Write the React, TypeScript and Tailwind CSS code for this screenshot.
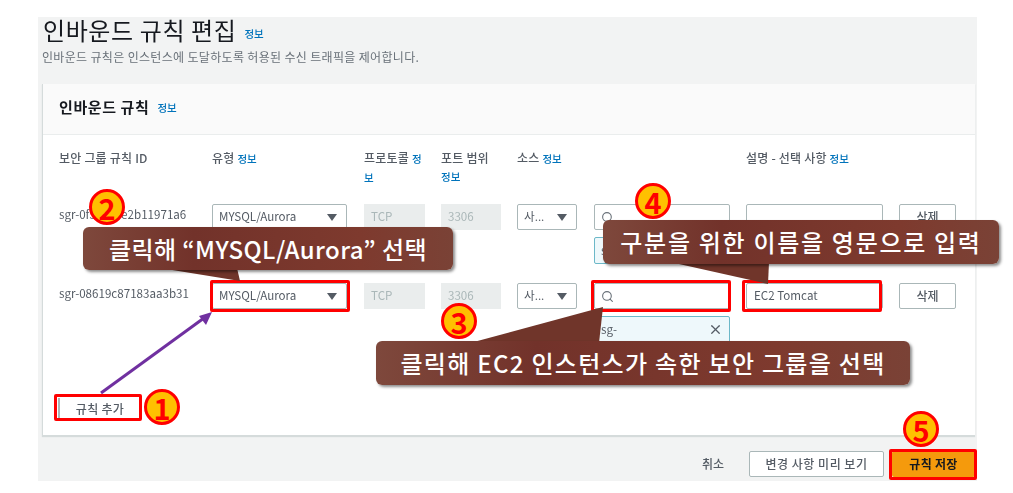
import { Search, X } from "lucide-react";

const font = "[font-family:'Noto_Sans_CJK_KR','Noto_Sans',sans-serif]";
const headers = [
  { label: "보안 그룹 규칙 ID", info: false },
  { label: "유형", info: true },
  { label: "프로토콜", info: true },
  { label: "포트 범위", info: true },
  { label: "소스", info: true },
  { label: "", info: false },
  { label: "설명 - 선택 사항", info: true },
  { label: "", info: false },
];
const rows = [
  { id: "sgr-0f5c1a7e2b11971a6", desc: "" },
  { id: "sgr-08619c87183aa3b31", desc: "EC2 Tomcat" },
];
const circles = [
  { label: "1", cls: "left-[144px] top-[389px]" },
  { label: "2", cls: "left-[89px] top-[189px]" },
  { label: "3", cls: "left-[441px] top-[303px]" },
  { label: "4", cls: "left-[635px] top-[183px]" },
  { label: "5", cls: "left-[903px] top-[411px]" },
];
const redBoxes = [
  "left-[54px] top-[394px] w-[88px] h-[27px]",
  "left-[210px] top-[280px] w-[140px] h-[32px]",
  "left-[591px] top-[280px] w-[140px] h-[32px]",
  "left-[742px] top-[280px] w-[140px] h-[32px]",
  "left-[889px] top-[449px] w-[88px] h-[31px]",
];

function Info() {
  return <span className="text-[10.5px] font-medium tracking-normal text-[#0073bb]">정보</span>;
}

function Select({ text, className }: { text: string; className: string }) {
  return (
    <div className={`flex h-[26px] items-center justify-between rounded-[2px] border border-[#aab7b8] bg-white pl-[6px] pr-[9px] text-[11.6px] text-[#545b64] ${className}`}>
      <span>{text}</span>
      <span className="h-0 w-0 border-x-[5px] border-t-[7px] border-x-transparent border-t-[#545b64]" />
    </div>
  );
}

function Rule({ id, desc }: { id: string; desc: string }) {
  return (
    <>
      <div className="pt-[1px] text-[11.6px] leading-[18px] text-[#545b64]">{id}</div>
      <Select text="MYSQL/Aurora" className="w-[135px]" />
      <div className="flex h-[26px] items-center bg-[#eaeded] pl-[7px] text-[11.6px] text-[#aab7b8]">TCP</div>
      <div className="flex h-[26px] items-center bg-[#eaeded] pl-[7px] text-[11.6px] text-[#aab7b8]">3306</div>
      <Select text="사..." className="w-[60px]" />
      <div>
        <div className="flex h-[26px] items-center rounded-[2px] border border-[#aab7b8] bg-white pl-[6px]">
          <Search size={13} strokeWidth={2} className="text-[#687078]" />
        </div>
        <div className="mt-[7px] flex h-[27px] items-center justify-between rounded-[2px] border border-[#6cb8c8] bg-[#eef8fb] px-[6px] text-[11.6px] text-[#545b64]">
          <span>sg-</span>
          <X size={15} strokeWidth={2} className="text-[#545b64]" />
        </div>
      </div>
      <div className="flex h-[26px] items-center rounded-[2px] border border-[#aab7b8] bg-white pl-[7px] text-[11.6px] text-[#545b64]">{desc}</div>
      <button className="h-[26px] rounded-[2px] border border-[#aab7b8] bg-white text-[12px] font-medium text-[#545b64]">삭제</button>
    </>
  );
}

export default function App() {
  return (
    <div className={`relative h-[493px] w-[1013px] overflow-hidden bg-white pl-[38px] pt-[17px] ${font}`}>
      <div className="flex h-[464px] w-[939px] flex-col bg-[#f2f3f3] blur-[0.5px]">
        <div className="flex h-[67px] flex-col pl-[5px]">
          <div className="flex items-end gap-[8px]">
            <h1 className="-mt-[1px] text-[24px] leading-[28px] tracking-[0.6px] text-[#16191f]">인바운드 규칙 편집</h1>
            <span className="pb-[1px]"><Info /></span>
          </div>
          <p className="-ml-[1px] mt-[5px] text-[12px] leading-[16px] tracking-[0.33px] text-[#687078]">인바운드 규칙은 인스턴스에 도달하도록 허용된 수신 트래픽을 제어합니다.</p>
        </div>
        <div className="ml-[4px] h-[352px] w-[933px] border-b border-l border-[#d5dbdb] bg-white shadow-[0_1px_1px_#d5dbdb]">
          <div className="flex h-[51px] items-center gap-[8px] border-b border-[#eaeded] bg-[#fafafa] pb-[3px] pl-[16px]">
            <h2 className="text-[15px] font-bold tracking-[0.6px] text-[#16191f]">인바운드 규칙</h2>
            <Info />
          </div>
          <div className="grid grid-cols-[137px_136px_61px_60px_61px_136px_137px_57px] gap-x-[16px] gap-y-[19px] pl-[16px] pt-[14px]">
            {headers.map((h, i) => (
              <div key={i} className="h-[36px] text-[12px] font-medium leading-[18px] tracking-[0.2px] text-[#545b64]">
                {h.label} {h.info && <Info />}
              </div>
            ))}
            {rows.map((r) => (
              <Rule key={r.id} id={r.id} desc={r.desc} />
            ))}
          </div>
          <div className="pl-[15px] pt-[52px]">
            <button className="h-[23px] w-[82px] border-l-2 border-[#aab7b8] bg-white text-[12px] font-medium tracking-[0.3px] text-[#545b64]">규칙 추가</button>
          </div>
        </div>
        <div className="flex items-center justify-end pr-[2px] pt-[15px]">
          <span className="mr-[25px] text-[12px] font-medium text-[#545b64]">취소</span>
          <button className="h-[26px] w-[135px] rounded-[2px] border border-[#aab7b8] bg-white text-[12px] font-medium tracking-[0.5px] text-[#545b64]">변경 사항 미리 보기</button>
          <button className="ml-[8px] h-[26px] w-[83px] rounded-[2px] bg-[#f59a0c] text-[12px] font-bold tracking-[0.3px] text-[#16191f]">규칙 저장</button>
        </div>
      </div>

      {redBoxes.map((cls) => (
        <div key={cls} className={`absolute rounded-[2px] border-[3px] border-[#ff0000] ${cls}`} />
      ))}

      <svg className="absolute left-0 top-0" width="1013" height="493">
        <line x1="101" y1="393" x2="204" y2="318" stroke="#7030a0" strokeWidth="3" />
        <polygon points="212,312 199,316 206,325" fill="#7030a0" />
        <polygon points="160,268 237,268 240,281" fill="#70352a" />
        <polygon points="670,262 769,262 768,284" fill="#70352a" />
        <polygon points="470,343 599,343 603,307" fill="#70352a" />
      </svg>

      <div className="absolute left-[83px] top-[227px] flex h-[43px] w-[370px] items-center justify-center rounded-[6px] bg-[linear-gradient(90deg,#7e483c,#72322a_30%,#7e3a2e_75%,#7a4236)] text-[24px] font-medium tracking-[0.4px] text-white shadow-[2px_2px_3px_rgba(0,0,0,0.45)]">
        클릭해 “MYSQL/Aurora” 선택
      </div>
      <div className="absolute left-[603px] top-[220px] flex h-[44px] w-[396px] items-center justify-center rounded-[6px] bg-[linear-gradient(90deg,#7e483c,#72322a_30%,#7e3a2e_75%,#7a4236)] text-[24px] font-medium tracking-[1.7px] text-white shadow-[2px_2px_3px_rgba(0,0,0,0.45)]">
        구분을 위한 이름을 영문으로 입력
      </div>
      <div className="absolute left-[376px] top-[341px] flex h-[44px] w-[534px] items-center justify-center rounded-[6px] bg-[linear-gradient(90deg,#7e483c,#72322a_30%,#7e3a2e_75%,#7a4236)] text-[24px] font-medium tracking-[1.3px] text-white shadow-[2px_2px_3px_rgba(0,0,0,0.45)]">
        클릭해 EC2 인스턴스가 속한 보안 그룹을 선택
      </div>

      {circles.map((c) => (
        <div key={c.label} className={`absolute flex h-[36px] w-[36px] items-center justify-center rounded-full border-[3px] border-[#ff0000] bg-[#ffc000] text-[29px] font-bold leading-none text-[#ff0000] ${c.cls}`}>
          {c.label}
        </div>
      ))}
    </div>
  );
}
